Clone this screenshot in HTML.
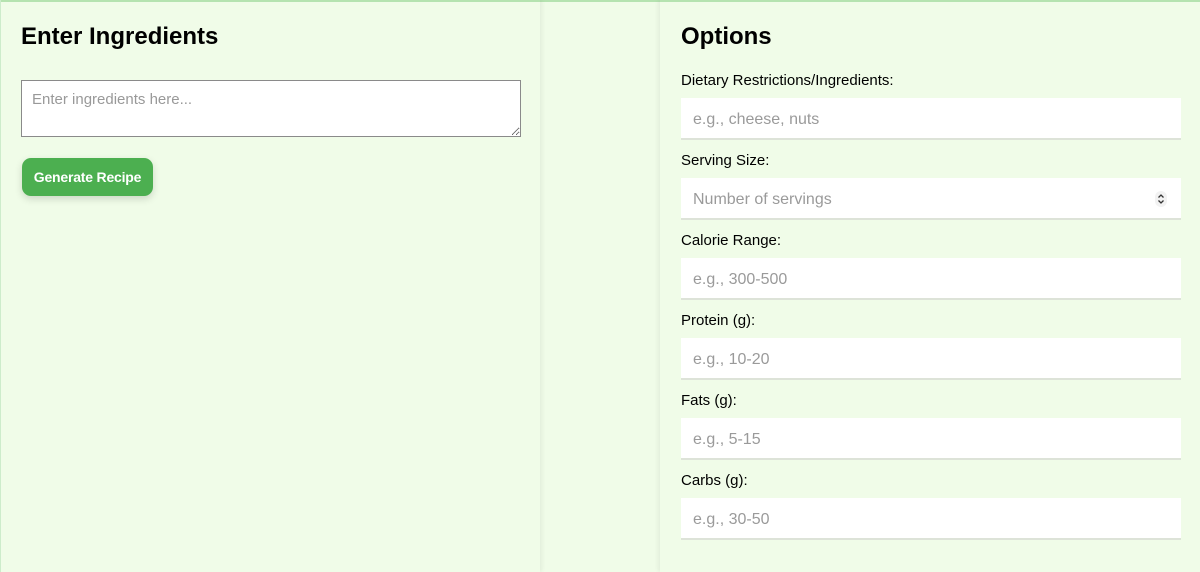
<!DOCTYPE html>
<html><head><style>
body{margin:0;width:1200px;height:570px;background:#f0fce8;font-family:"Liberation Sans",Arial,sans-serif;position:relative;overflow:hidden;border-top:2px solid #b5e3b0;box-sizing:border-box}
.left{position:absolute;left:0;top:-2px;width:540px;height:572px;box-shadow:2px 0 4px rgba(0,0,0,0.06);border-left:1px solid #cdeccb;box-sizing:border-box}
.right{position:absolute;left:660px;top:-2px;width:540px;height:572px;box-shadow:-2px 0 4px rgba(0,0,0,0.06)}
h2{margin:0;position:absolute;font-size:24px;font-weight:bold;color:#000;top:23px}
textarea{position:absolute;left:20px;top:80px;width:500px;height:57px;box-sizing:border-box;border:1px solid #8a8a8a;padding:10px;font-family:inherit;font-size:15px;background:#fff}
textarea::placeholder{color:#999}
.btn{position:absolute;left:21px;top:158px;width:131px;height:38px;background:#4caf50;color:#fff;border-radius:9px;font-weight:bold;font-size:14px;line-height:38px;text-align:center;box-shadow:0 3px 8px rgba(0,0,0,0.15);letter-spacing:-0.2px}
.lab{position:absolute;left:21px;font-size:15px;color:#000}
.inp{position:absolute;left:21px;width:500px;height:42px;background:#fff;border-bottom:2px solid #dde3d8;box-sizing:border-box;color:#9a9a9a;font-size:16px;padding-left:12px;line-height:44px}
.spin{position:absolute;right:14px;top:13px;width:12px;height:16px;border-radius:6px;background:#f2f2f2}
.spin svg{display:block}
</style></head><body>
<div class="left">
<h2 style="left:20px">Enter Ingredients</h2>
<textarea placeholder="Enter ingredients here..."></textarea>
<div class="btn">Generate Recipe</div>
</div>
<div class="right">
<h2 style="left:21px">Options</h2>
<div class="lab" style="top:72px">Dietary Restrictions/Ingredients:</div>
<div class="inp" style="top:98px">e.g., cheese, nuts</div>
<div class="lab" style="top:152px">Serving Size:</div>
<div class="inp" style="top:178px">Number of servings<div class="spin"><svg width="12" height="16" viewBox="0 0 12 16"><path d="M3.5 6.5L6 4L8.5 6.5M3.5 9.5L6 12L8.5 9.5" fill="none" stroke="#333" stroke-width="1.3"/></svg></div></div>
<div class="lab" style="top:232px">Calorie Range:</div>
<div class="inp" style="top:258px">e.g., 300-500</div>
<div class="lab" style="top:312px">Protein (g):</div>
<div class="inp" style="top:338px">e.g., 10-20</div>
<div class="lab" style="top:392px">Fats (g):</div>
<div class="inp" style="top:418px">e.g., 5-15</div>
<div class="lab" style="top:472px">Carbs (g):</div>
<div class="inp" style="top:498px">e.g., 30-50</div>
</div>
</body></html>
